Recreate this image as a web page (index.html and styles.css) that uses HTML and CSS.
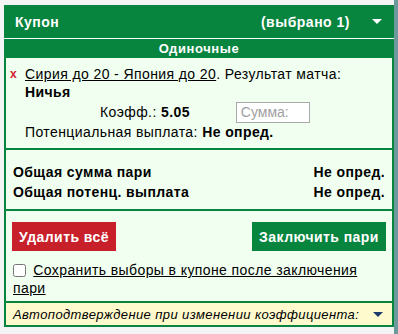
FILE: index.html
```html
<!DOCTYPE html>
<html lang="ru">
<head>
    <meta charset="UTF-8">
    <meta name="viewport" content="width=device-width, initial-scale=1.0">
    <title>Купон</title>
    <link rel="stylesheet" href="styles.css">
</head>
<body>
    <div class="page">
        <div class="coupon">
            <div class="coupon-head">
                <span class="title">Купон</span>
                <span class="count">(выбрано 1)</span>
                <span class="arrow"></span>
            </div>
            <div class="sub-head">Одиночные</div>

            <div class="coupon-body">
                <div class="bet">
                    <div class="bet-line">
                        <span class="remove">x</span>
                        <div class="bet-text">
                            <a href="#">Сирия до 20 - Япония до 20</a>. Результат матча:
                            <b>Ничья</b>
                        </div>
                    </div>
                    <div class="odds-row">
                        <span>Коэфф.: <b>5.05</b></span>
                        <input type="text" class="stake" placeholder="Сумма:">
                    </div>
                    <div class="payout">Потенциальная выплата: <b>Не опред.</b></div>
                </div>

                <div class="totals">
                    <div class="total-row"><span>Общая сумма пари</span><span>Не опред.</span></div>
                    <div class="total-row"><span>Общая потенц. выплата</span><span>Не опред.</span></div>
                </div>

                <div class="actions">
                    <div class="buttons">
                        <button class="btn btn-red">Удалить всё</button>
                        <button class="btn btn-green">Заключить пари</button>
                    </div>
                    <label class="keep">
                        <input type="checkbox" class="keep-box">
                        <a href="#">Сохранить выборы в купоне после заключения пари</a>
                    </label>
                </div>

                <div class="auto">
                    <span>Автоподтверждение при изменении коэффициента:</span>
                    <span class="arrow arrow-dark"></span>
                </div>
            </div>
        </div>
        <div class="scroll-edge"></div>
    </div>
</body>
</html>
```

FILE: styles.css
```css
body {
    margin: 0;
    background-color: #f4f4f4;
    font-family: "Liberation Sans", Arial, sans-serif;
    font-size: 14px;
    letter-spacing: 0.4px;
    color: #000;
}

.page {
    display: flex;
    height: 334px;
}

.coupon {
    width: 390px;
    margin: 5px 0 0 4px;
}

.coupon-head {
    display: flex;
    align-items: center;
    height: 33px;
    padding: 0 12px 0 11px;
    background-color: #07853f;
    color: #fff;
    font-size: 14px;
    font-weight: bold;
    letter-spacing: 0.5px;
}

.coupon-head .title {
    flex: 1;
}

.arrow {
    width: 0;
    height: 0;
    margin-left: 22px;
    border-left: 5px solid transparent;
    border-right: 5px solid transparent;
    border-top: 5px solid #fff;
}

.sub-head {
    height: 19px;
    line-height: 19px;
    border-top: 1px solid #fff;
    background-color: #07853f;
    color: #fff;
    font-size: 13px;
    font-weight: bold;
    letter-spacing: 0.6px;
    text-align: center;
}

.coupon-body {
    background-color: #f0fff0;
    border: 2px solid #07853f;
    border-top: none;
}

.bet {
    padding: 7px 6px 7px 4px;
    line-height: 18px;
}

.bet-line {
    display: flex;
}

.remove {
    width: 15px;
    flex-shrink: 0;
    color: #d0202e;
    font-weight: bold;
    font-size: 12px;
}

.bet-text a,
.keep a {
    color: #000;
}

.bet-text b {
    display: block;
}

.odds-row {
    display: flex;
    align-items: center;
    height: 22px;
    margin-left: 90px;
}

.stake {
    width: 74px;
    height: 21px;
    margin-left: 46px;
    padding: 0 4px;
    box-sizing: border-box;
    border: 1px solid #a9a9a9;
    background-color: #fff;
    font-family: "Liberation Sans", Arial, sans-serif;
    font-size: 14px;
}

.stake::placeholder {
    color: #a0a0a0;
}

.payout {
    padding-left: 15px;
}

.totals {
    padding: 12px 7px 7px 7px;
    border-top: 2px solid #07853f;
    border-bottom: 2px solid #07853f;
    font-weight: bold;
    line-height: 20px;
}

.total-row {
    display: flex;
    justify-content: space-between;
}

.actions {
    padding: 11px 6px 4px 6px;
    border-bottom: 2px solid #07853f;
}

.buttons {
    display: flex;
    justify-content: space-between;
}

.btn {
    height: 29px;
    padding: 0;
    border: none;
    color: #fff;
    font-family: "Liberation Sans", Arial, sans-serif;
    font-size: 14px;
    font-weight: bold;
    letter-spacing: 0.45px;
    cursor: pointer;
}

.btn-red {
    width: 104px;
    background-color: #c8202b;
}

.btn-green {
    width: 134px;
    background-color: #07853f;
}

.keep {
    display: block;
    margin-top: 10px;
    padding-left: 1px;
    line-height: 18px;
}

.keep-box {
    width: 13px;
    height: 13px;
    margin: 0 3px 0 0;
    vertical-align: -2px;
}

.auto {
    display: flex;
    align-items: center;
    justify-content: space-between;
    height: 22px;
    padding: 0 9px 0 7px;
    background-color: #fffacd;
    font-size: 13px;
    font-style: italic;
}

.arrow-dark {
    border-top-color: #1b3a6b;
    margin-left: 0;
}

.scroll-edge {
    width: 4px;
    background-color: #6c9a9c;
}
```
